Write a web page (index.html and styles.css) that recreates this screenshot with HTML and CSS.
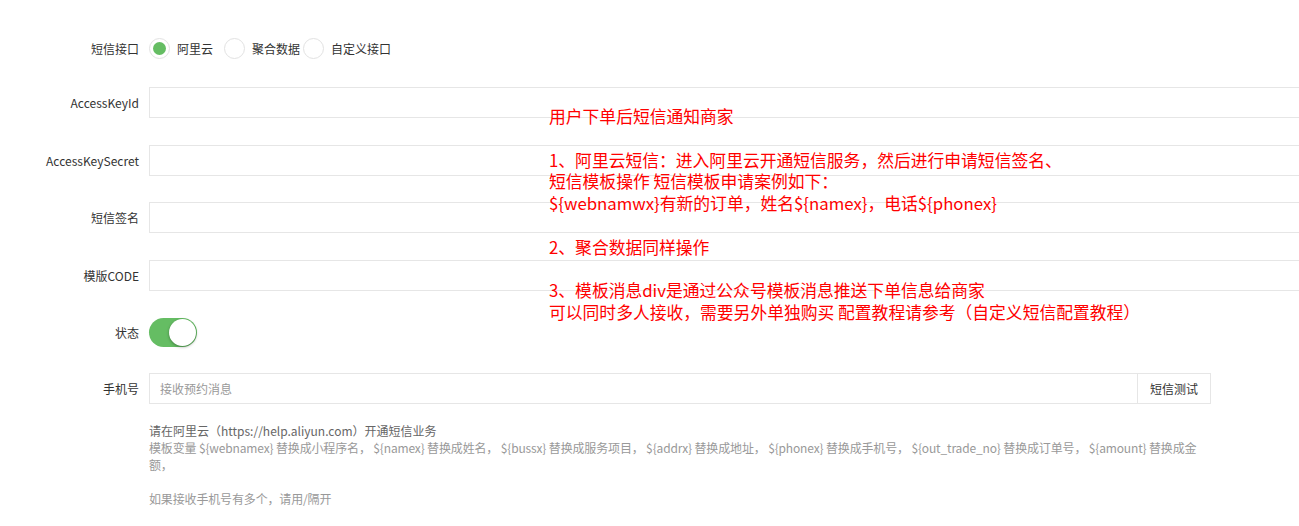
FILE: index.html
```html
<!DOCTYPE html>
<html lang="zh-CN">

<head>
    <meta charset="UTF-8">
    <meta name="viewport" content="width=device-width, initial-scale=1.0">
    <title>短信配置</title>
    <link rel="stylesheet" href="styles.css">
</head>

<body>

    <div class="page">
        <form class="sms-form">
            <div class="form-item radio-row">
                <label class="form-label">短信接口</label>
                <div class="radio-group">
                    <span class="radio checked"></span><span class="radio-text">阿里云</span>
                    <span class="radio"></span><span class="radio-text">聚合数据</span>
                    <span class="radio"></span><span class="radio-text">自定义接口</span>
                </div>
            </div>
            <div class="form-item">
                <label class="form-label">AccessKeyId</label>
                <input type="text" class="form-input">
            </div>
            <div class="form-item">
                <label class="form-label">AccessKeySecret</label>
                <input type="text" class="form-input">
            </div>
            <div class="form-item">
                <label class="form-label">短信签名</label>
                <input type="text" class="form-input">
            </div>
            <div class="form-item">
                <label class="form-label">模版CODE</label>
                <input type="text" class="form-input">
            </div>
            <div class="form-item switch-row">
                <label class="form-label">状态</label>
                <span class="switch"><span class="knob"></span></span>
            </div>
            <div class="form-item phone-row">
                <label class="form-label">手机号</label>
                <div class="input-group">
                    <input type="text" class="form-input" placeholder="接收预约消息">
                    <button type="button" class="test-btn">短信测试</button>
                </div>
            </div>
            <div class="help-block">
                <div class="help-main">请在阿里云（https://help.aliyun.com）开通短信业务</div>
                <div class="help-sub">模板变量 ${webnamex} 替换成小程序名， ${namex} 替换成姓名， ${bussx} 替换成服务项目， ${addrx} 替换成地址， ${phonex} 替换成手机号， ${out_trade_no} 替换成订单号， ${amount} 替换成金额，</div>
                <div class="help-sub"><br>如果接收手机号有多个，请用/隔开</div>
            </div>
        </form>

        <!-- notice that sits over the form -->
        <div class="notice">
            用户下单后短信通知商家<br>
            <br>
            1、阿里云短信：进入阿里云开通短信服务，然后进行申请短信签名、<br>
            短信模板操作 短信模板申请案例如下：<br>
            ${webnamwx}有新的订单，姓名${namex}，电话${phonex}<br>
            <br>
            2、聚合数据同样操作<br>
            <br>
            3、模板消息div是通过公众号模板消息推送下单信息给商家<br>
            可以同时多人接收，需要另外单独购买 配置教程请参考（自定义短信配置教程）
        </div>
    </div>

</body>

</html>
```

FILE: styles.css
```css
html,
body {
    margin: 0;
    padding: 0;
    background: #fff;
    overflow: hidden;
}

body {
    font-family: "Noto Sans CJK SC", "Noto Sans", sans-serif;
    font-size: 12px;
    color: #333;
}

.page {
    position: relative;
    width: 1299px;
    height: 526px;
    overflow: hidden;
}

.sms-form {
    width: 1500px;
    padding-top: 29px;
}

.form-item {
    display: flex;
    align-items: center;
    height: 31px;
    margin-bottom: 26.7px;
}

.radio-row {
    margin-top: 4px;
    margin-bottom: 23px;
}

.form-label {
    box-sizing: border-box;
    width: 149px;
    padding-right: 10px;
    text-align: right;
    flex-shrink: 0;
}

.form-input {
    box-sizing: border-box;
    flex: 1;
    height: 31px;
    padding: 0 10px;
    border: 1px solid #e6e6e6;
    outline: none;
    font-family: inherit;
    font-size: 12px;
    color: #333;
    background: #fff;
}

.form-input::placeholder {
    color: #999;
}

/* Radios */
.radio-group {
    display: flex;
    align-items: center;
}

.radio {
    box-sizing: border-box;
    width: 21px;
    height: 21px;
    border: 1px solid #e2e2e2;
    border-radius: 50%;
    display: flex;
    align-items: center;
    justify-content: center;
    margin-right: 7px;
}

.radio.checked::after {
    content: "";
    width: 13px;
    height: 13px;
    border-radius: 50%;
    background: #65bd63;
}

.radio-text {
    min-width: 44px;
    padding-right: 3px;
}

/* Switch */
.switch-row {
    height: 29px;
    margin-bottom: 26.2px;
}

.switch {
    position: relative;
    width: 48px;
    height: 29px;
    border-radius: 15px;
    background: #65bd63;
}

.knob {
    position: absolute;
    top: 1px;
    right: 1px;
    width: 27px;
    height: 27px;
    border-radius: 50%;
    background: #fff;
    box-shadow: 0 1px 3px rgba(0, 0, 0, 0.35);
}

/* Phone row */
.phone-row {
    margin-bottom: 18px;
}

.input-group {
    display: flex;
    width: 1062px;
}

.test-btn {
    box-sizing: border-box;
    width: 73px;
    height: 31px;
    border: 1px solid #e6e6e6;
    border-left: none;
    background: #fff;
    font-family: inherit;
    font-size: 12px;
    color: #333;
    padding: 0;
}

.help-block {
    margin-left: 149px;
    width: 1062px;
    line-height: 17px;
}

.help-main {
    color: #666;
}

.help-sub {
    color: #999;
    letter-spacing: -0.15px;
}

/* Red notice */
.notice {
    position: absolute;
    left: 549px;
    top: 106px;
    font-size: 16.8px;
    line-height: 21.8px;
    color: #f00;
    white-space: nowrap;
}
```
